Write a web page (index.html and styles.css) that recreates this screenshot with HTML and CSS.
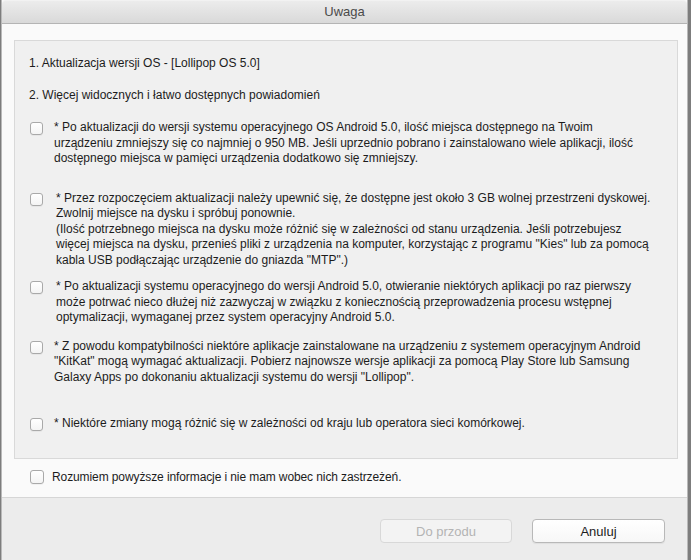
FILE: index.html
```html
<!DOCTYPE html>
<html lang="pl">
<head>
<meta charset="utf-8">
<title>Uwaga</title>
<link rel="stylesheet" href="styles.css">
</head>
<body>
<div class="window">
  <div class="titlebar">Uwaga</div>
  <div class="content">
    <div class="panel">
      <p class="line">1. Aktualizacja wersji OS - [Lollipop OS 5.0]</p>
      <p class="line line-second">2. Więcej widocznych i łatwo dostępnych powiadomień</p>

      <div class="item item-first">
        <span class="check"></span>
        <p class="item-text">* Po aktualizacji do wersji systemu operacyjnego OS Android 5.0, ilość miejsca dostępnego na Twoim<br>urządzeniu zmniejszy się co najmniej o 950 MB. Jeśli uprzednio pobrano i zainstalowano wiele aplikacji, ilość<br>dostępnego miejsca w pamięci urządzenia dodatkowo się zmniejszy.</p>
      </div>

      <div class="item item-second">
        <span class="check"></span>
        <p class="item-text item-text-shift">* Przez rozpoczęciem aktualizacji należy upewnić się, że dostępne jest około 3 GB wolnej przestrzeni dyskowej.<br>Zwolnij miejsce na dysku i spróbuj ponownie.<br>(Ilość potrzebnego miejsca na dysku może różnić się w zależności od stanu urządzenia. Jeśli potrzebujesz<br>więcej miejsca na dysku, przenieś pliki z urządzenia na komputer, korzystając z programu "Kies" lub za pomocą<br>kabla USB podłączając urządzenie do gniazda "MTP".)</p>
      </div>

      <div class="item item-third">
        <span class="check"></span>
        <p class="item-text item-text-shift">* Po aktualizacji systemu operacyjnego do wersji Android 5.0, otwieranie niektórych aplikacji po raz pierwszy<br>może potrwać nieco dłużej niż zazwyczaj w związku z koniecznością przeprowadzenia procesu wstępnej<br>optymalizacji, wymaganej przez system operacyjny Android 5.0.</p>
      </div>

      <div class="item item-fourth">
        <span class="check"></span>
        <p class="item-text">* Z powodu kompatybilności niektóre aplikacje zainstalowane na urządzeniu z systemem operacyjnym Android<br>"KitKat" mogą wymagać aktualizacji. Pobierz najnowsze wersje aplikacji za pomocą Play Store lub Samsung<br>Galaxy Apps po dokonaniu aktualizacji systemu do wersji "Lollipop".</p>
      </div>

      <div class="item item-fifth">
        <span class="check"></span>
        <p class="item-text">* Niektóre zmiany mogą różnić się w zależności od kraju lub operatora sieci komórkowej.</p>
      </div>
    </div>

    <div class="agree">
      <span class="check check-agree"></span>
      <span class="agree-text">Rozumiem powyższe informacje i nie mam wobec nich zastrzeżeń.</span>
    </div>
  </div>
  <div class="footer">
    <button class="btn btn-disabled" type="button" disabled>Do przodu</button>
    <button class="btn" type="button">Anuluj</button>
  </div>
</div>
</body>
</html>
```

FILE: styles.css
```css
html, body {
  margin: 0;
  padding: 0;
}

body {
  width: 691px;
  height: 560px;
  overflow: hidden;
  background: #7d7d7d;
  font-family: "Liberation Sans", Arial, Helvetica, sans-serif;
  font-size: 12px;
  color: #1c1c1c;
}

.window {
  margin-left: 1px;
  width: 687px;
  height: 560px;
  border-left: 1px solid #b9b9b9;
  border-right: 1px solid #b9b9b9;
  background: #fafafa;
  display: flex;
  flex-direction: column;
  box-sizing: border-box;
}

.titlebar {
  height: 24px;
  box-sizing: border-box;
  border-top: 1px solid #f2f2f2;
  border-bottom: 1px solid #b4b4b4;
  background: linear-gradient(#ececec, #d9d9d9);
  text-align: center;
  font-size: 13px;
  line-height: 22px;
  color: #4a4a4a;
  border-radius: 4px 4px 0 0;
}

.content {
  padding: 16px 9px 0 12px;
  height: 473px;
  box-sizing: border-box;
}

.panel {
  background: #f0f0f0;
  border: 1px solid #d9d9d9;
  padding: 14px 10px 28px 14px;
  height: 419px;
  box-sizing: border-box;
}

.line {
  margin: 0;
  line-height: 16px;
  white-space: nowrap;
}

.line-second {
  margin-top: 16px;
}

.item {
  display: flex;
  align-items: flex-start;
  gap: 11px;
  padding-left: 1px;
}

.item-first { margin-top: 17px; }
.item-second { margin-top: 24px; }
.item-third { margin-top: 11px; }
.item-fourth { margin-top: 13px; }
.item-fifth { margin-top: 31px; }

.item-text {
  margin: 0;
  line-height: 15.5px;
  white-space: nowrap;
}

.item-text-shift {
  margin-left: 2px;
}

.check {
  flex: none;
  width: 13px;
  height: 13px;
  margin-top: 2px;
  box-sizing: border-box;
  border: 1px solid #a9a9a9;
  border-radius: 3px;
  background: linear-gradient(#ffffff, #f4f4f4);
  box-shadow: 0 1px 0 rgba(0, 0, 0, 0.04);
}

.agree {
  display: flex;
  align-items: center;
  gap: 8px;
  padding: 10px 0 0 16px;
  line-height: 16px;
}

.agree-text {
  letter-spacing: -0.1px;
}

.check-agree {
  width: 14px;
  height: 14px;
  margin-top: 0;
}

.footer {
  flex: 1;
  background: #ececec;
  border-top: 1px solid #d6d6d6;
  display: flex;
  justify-content: flex-end;
  align-items: flex-start;
  gap: 20px;
  padding: 21px 22px 0 0;
}

.btn {
  width: 133px;
  height: 24px;
  border: 1px solid #b8b8b8;
  border-radius: 4px;
  background: linear-gradient(#ffffff, #f7f7f7);
  font-family: "Liberation Sans", Arial, Helvetica, sans-serif;
  font-size: 13px;
  color: #1c1c1c;
  padding: 0;
  box-shadow: 0 1px 1px rgba(0, 0, 0, 0.06);
}

.btn-disabled {
  width: 132px;
  background: #f3f3f3;
  border-color: #d8d8d8;
  color: #b4b4b4;
  box-shadow: none;
}
```
